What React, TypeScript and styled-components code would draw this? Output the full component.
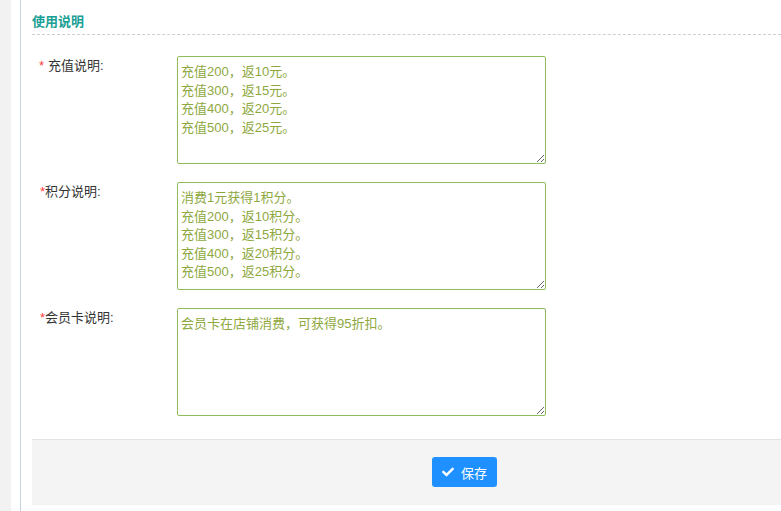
import React from 'react';
import styled, { createGlobalStyle } from 'styled-components';
import { FaCheck } from 'react-icons/fa';

const GlobalStyle = createGlobalStyle`
  html, body {
    margin: 0;
    padding: 0;
    background: #ffffff;
    font-family: "Liberation Sans", "Noto Sans CJK SC", sans-serif;
    font-size: 13px;
    color: #333333;
  }
`;

const Page = styled.div`
  display: flex;
  width: 781px;
  height: 511px;
  overflow: hidden;
`;

const SideStrip = styled.div`
  width: 11px;
  flex-shrink: 0;
  background-color: #f2f2f2;
  margin-right: 9px;
`;

const Main = styled.div`
  flex: 1;
  border-left: 1px solid #c6d4e0;
  padding-left: 11px;
  min-width: 0;
`;

const SectionTitle = styled.div`
  padding-top: 13px;
  height: 21px;
  border-bottom: 1px dashed #cfcfcf;
  font-size: 13px;
  font-weight: bold;
  color: #1aa094;
  line-height: 18px;
`;

const Form = styled.div`
  display: flex;
  flex-direction: column;
  gap: 18px;
  padding-top: 21px;
`;

const FormRow = styled.div`
  display: flex;
  align-items: flex-start;
`;

const Label = styled.label<{ $spaced?: boolean }>`
  width: 145px;
  flex-shrink: 0;
  box-sizing: border-box;
  padding-left: ${p => (p.$spaced ? 7 : 8)}px;
  padding-top: 1px;
  font-size: 13px;
  line-height: 18px;
  color: #333333;
`;

const Required = styled.span<{ $spaced?: boolean }>`
  color: #ff3b3b;
  margin-right: ${p => (p.$spaced ? 4 : 0)}px;
`;

const TextArea = styled.textarea`
  width: 369px;
  height: 108px;
  box-sizing: border-box;
  border: 1px solid #8fbd5a;
  border-radius: 2px;
  padding: 6px 3px 4px;
  font-family: "Liberation Sans", "Noto Sans CJK SC", sans-serif;
  font-size: 13px;
  line-height: 18.5px;
  color: #8ea83e;
  background: #ffffff;
  resize: both;
  outline: none;
`;

const Footer = styled.div`
  margin-top: 23px;
  height: 66px;
  box-sizing: border-box;
  background-color: #f4f4f4;
  border-top: 1px solid #e3e3e3;
  padding: 17px 0 0 400px;
`;

const SaveButton = styled.button`
  display: flex;
  align-items: center;
  gap: 7px;
  height: 30px;
  width: 65px;
  padding: 0 0 0 10px;
  box-sizing: border-box;
  border: none;
  border-radius: 3px;
  background-color: #1e90ff;
  color: #ffffff;
  font-family: "Liberation Sans", "Noto Sans CJK SC", sans-serif;
  font-size: 13px;
  cursor: pointer;
`;

const fields = [
  {
    label: '充值说明:',
    spaced: true,
    value: '充值200，返10元。\n充值300，返15元。\n充值400，返20元。\n充值500，返25元。',
  },
  {
    label: '积分说明:',
    spaced: false,
    value: '消费1元获得1积分。\n充值200，返10积分。\n充值300，返15积分。\n充值400，返20积分。\n充值500，返25积分。',
  },
  {
    label: '会员卡说明:',
    spaced: false,
    value: '会员卡在店铺消费，可获得95折扣。',
  },
];

const App: React.FC = () => {
  return (
    <>
      <GlobalStyle />
      <Page>
        <SideStrip />
        <Main>
          <SectionTitle>使用说明</SectionTitle>
          <Form>
            {fields.map(field => (
              <FormRow key={field.label}>
                <Label $spaced={field.spaced}>
                  <Required $spaced={field.spaced}>*</Required>
                  {field.label}
                </Label>
                <TextArea defaultValue={field.value} />
              </FormRow>
            ))}
          </Form>
          <Footer>
            <SaveButton>
              <FaCheck size={12} />
              保存
            </SaveButton>
          </Footer>
        </Main>
      </Page>
    </>
  );
};

export default App;
